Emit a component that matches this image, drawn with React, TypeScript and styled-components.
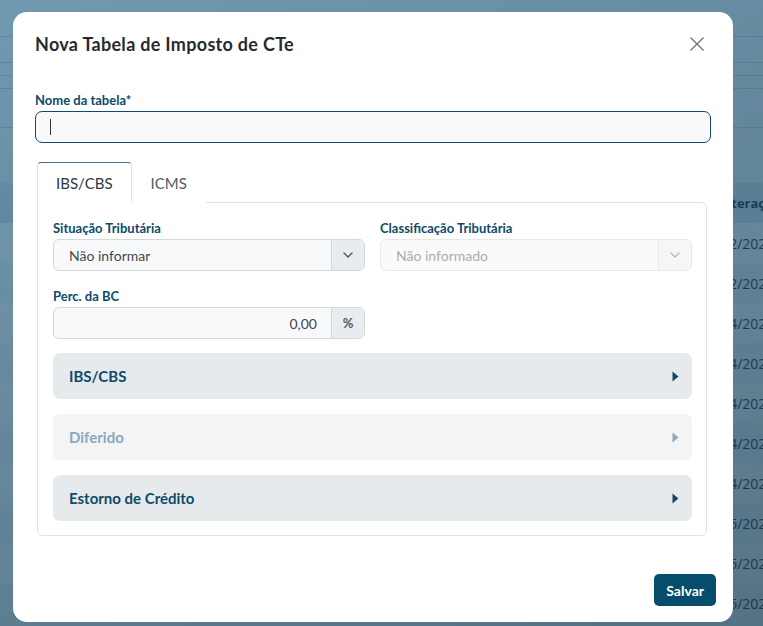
import React from 'react';
import styled, { createGlobalStyle } from 'styled-components';

const GlobalStyle = createGlobalStyle`
  html, body {
    margin: 0;
    padding: 0;
  }
  body {
    width: 763px;
    height: 626px;
    overflow: hidden;
    font-family: Lato, "Open Sans", sans-serif;
  }
  * {
    box-sizing: border-box;
  }
`;

/* ---------- page behind the modal ---------- */

const Page = styled.div`
  width: 763px;
  height: 626px;
  display: flex;
  flex-direction: column;
  overflow: hidden;
  background: #eef2f5;
  font-family: "Open Sans", sans-serif;
  color: #1d2a33;
`;

const Band = styled.div<{ $h: number }>`
  flex-shrink: 0;
  height: ${(p) => p.$h}px;
  border-bottom: 1px solid #c3ced6;
`;

const Spacer = styled.div<{ $h: number }>`
  flex-shrink: 0;
  height: ${(p) => p.$h}px;
`;

const TableRow = styled.div<{ $head?: boolean; $odd?: boolean }>`
  flex-shrink: 0;
  display: flex;
  align-items: center;
  height: 40px;
  padding-left: ${(p) => (p.$head ? '696px' : '700px')};
  white-space: nowrap;
  font-weight: ${(p) => (p.$head ? 700 : 400)};
  font-size: ${(p) => (p.$head ? '13px' : '14px')};
  background: ${(p) => (p.$head ? '#dbe3e9' : p.$odd ? '#f3f6f8' : '#ffffff')};
`;

/* ---------- modal ---------- */

const Backdrop = styled.div`
  position: fixed;
  inset: 0;
  padding: 12px 0 0 13px;
  background: linear-gradient(160deg, rgba(22, 88, 124, 0.58), rgba(22, 62, 86, 0.72));
`;

const Modal = styled.div`
  width: 720px;
  height: 610px;
  display: flex;
  flex-direction: column;
  background: #fff;
  border-radius: 14px;
  padding: 20px 17px 16px 22px;
  font-family: Lato, "Open Sans", sans-serif;
`;

const Header = styled.div`
  display: flex;
  align-items: center;
  justify-content: space-between;
  height: 24px;
`;

const Title = styled.h2`
  margin: 0;
  font-size: 18px;
  font-weight: 700;
  color: #262b30;
  letter-spacing: 0.3px;
`;

const CloseButton = styled.button`
  display: flex;
  align-items: center;
  justify-content: center;
  width: 24px;
  height: 24px;
  margin-right: 7px;
  padding: 0;
  border: none;
  background: none;
  color: #6f6f6f;
  cursor: pointer;
`;

const Label = styled.label`
  display: block;
  margin-bottom: 3px;
  font-size: 13px;
  line-height: 16px;
  font-weight: 700;
  color: #0d4a6b;
`;

const NameField = styled.div`
  margin-top: 36px;
  margin-right: 5px;
`;

const InputWrap = styled.div`
  position: relative;
`;

const TextInput = styled.input`
  width: 100%;
  height: 32px;
  padding: 0 15px;
  border: 1px solid #0d4a6b;
  border-radius: 7px;
  background: #f9f9f9;
  font-family: inherit;
  font-size: 14px;
  color: #333;
  outline: none;
  caret-color: #333;
`;

const Cursor = styled.span`
  position: absolute;
  left: 15px;
  top: 8px;
  width: 1px;
  height: 16px;
  background: #333;
  pointer-events: none;
`;

const Tabs = styled.div`
  margin: 19px 9px 0 2px;
`;

const TabList = styled.div`
  display: flex;
  height: 40px;
`;

const Tab = styled.button<{ $active?: boolean }>`
  position: relative;
  z-index: 1;
  height: 41px;
  padding: 0 18px;
  border: 1px solid ${(p) => (p.$active ? '#dee2e6' : 'transparent')};
  border-top-color: ${(p) => (p.$active ? '#4b7189' : 'transparent')};
  border-bottom-color: ${(p) => (p.$active ? '#fff' : 'transparent')};
  border-radius: 4px 4px 0 0;
  background: #fff;
  font-family: inherit;
  font-size: 15px;
  color: ${(p) => (p.$active ? '#2d3a44' : '#555b60')};
  cursor: pointer;
`;

const TabPanel = styled.div`
  height: 334px;
  display: flex;
  flex-direction: column;
  padding: 17px 14px 15px 15px;
  border: 1px solid #dee2e6;
  border-radius: 0 6px 6px 6px;
`;

const FieldGrid = styled.div`
  display: grid;
  grid-template-columns: 1fr 1fr;
  column-gap: 15px;
  row-gap: 17px;
`;

const Group = styled.div<{ $disabled?: boolean }>`
  display: flex;
  height: 32px;
  border: 1px solid ${(p) => (p.$disabled ? '#e6e8ea' : '#d3d8dc')};
  border-radius: 6px;
  overflow: hidden;
  background: ${(p) => (p.$disabled ? '#fafafa' : '#f8f9fa')};
`;

const GroupText = styled.div<{ $disabled?: boolean; $right?: boolean }>`
  flex: 1;
  display: flex;
  align-items: center;
  justify-content: ${(p) => (p.$right ? 'flex-end' : 'flex-start')};
  padding: ${(p) => (p.$right ? '0 14px 0 0' : '0 0 0 15px')};
  font-size: 14px;
  color: ${(p) => (p.$disabled ? '#a9adb1' : '#41484e')};
`;

const Addon = styled.div<{ $disabled?: boolean }>`
  width: 33px;
  display: flex;
  align-items: center;
  justify-content: center;
  border-left: 1px solid ${(p) => (p.$disabled ? '#e6e8ea' : '#d3d8dc')};
  background: ${(p) => (p.$disabled ? '#f5f6f7' : '#e9ecef')};
  color: ${(p) => (p.$disabled ? '#b5babe' : '#4d555c')};
  font-size: 13px;
  font-weight: 700;
`;

const Accordions = styled.div`
  display: flex;
  flex-direction: column;
  gap: 15px;
  margin-top: 14px;
`;

const AccordionItem = styled.button<{ $disabled?: boolean }>`
  display: flex;
  align-items: center;
  justify-content: space-between;
  height: 46px;
  padding: 0 13px 0 16px;
  border: none;
  border-radius: 7px;
  background: ${(p) => (p.$disabled ? '#f3f4f6' : '#e7eaed')};
  font-family: inherit;
  font-size: 15px;
  font-weight: 700;
  color: ${(p) => (p.$disabled ? '#8ea7ba' : '#0d4a6b')};
  cursor: ${(p) => (p.$disabled ? 'default' : 'pointer')};
`;

const Footer = styled.div`
  display: flex;
  justify-content: flex-end;
  margin-top: auto;
`;

const SaveButton = styled.button`
  height: 32px;
  padding: 0 12px;
  border: none;
  border-radius: 5px;
  background: #064c6b;
  font-family: inherit;
  font-size: 14px;
  font-weight: 700;
  color: #fff;
  cursor: pointer;
`;

const Chevron = () => (
  <svg width="10" height="6" viewBox="0 0 10 6" fill="none">
    <path d="M1 1l4 4 4-4" stroke="currentColor" strokeWidth="1.4" strokeLinecap="round" strokeLinejoin="round" />
  </svg>
);

const Caret = () => (
  <svg width="7" height="11" viewBox="0 0 7 11">
    <path d="M0.5 0.5L6.5 5.5L0.5 10.5Z" fill="currentColor" />
  </svg>
);

const dates = [
  '15/12/2025',
  '10/12/2025',
  '28/04/2025',
  '22/04/2025',
  '17/04/2025',
  '09/04/2025',
  '03/04/2025',
  '26/05/2025',
  '19/05/2025',
  '12/05/2025',
];

export default function App() {
  return (
    <>
      <GlobalStyle />
      <Page>
        <Band $h={37} />
        <Band $h={26} />
        <Band $h={13} />
        <Band $h={13} />
        <Band $h={39} />
        <Spacer $h={55} />
        <TableRow $head>Dt. Alteração</TableRow>
        {dates.map((d, i) => (
          <TableRow key={d} $odd={i % 2 === 1}>
            {d}
          </TableRow>
        ))}
      </Page>

      <Backdrop>
        <Modal role="dialog" aria-modal="true">
          <Header>
            <Title>Nova Tabela de Imposto de CTe</Title>
            <CloseButton aria-label="Fechar">
              <svg width="16" height="16" viewBox="0 0 16 16">
                <path d="M1.5 1.5l13 13M14.5 1.5l-13 13" stroke="currentColor" strokeWidth="1.3" />
              </svg>
            </CloseButton>
          </Header>

          <NameField>
            <Label htmlFor="nome">Nome da tabela*</Label>
            <InputWrap>
              <TextInput id="nome" />
              <Cursor />
            </InputWrap>
          </NameField>

          <Tabs>
            <TabList>
              <Tab $active>IBS/CBS</Tab>
              <Tab>ICMS</Tab>
            </TabList>
            <TabPanel>
              <FieldGrid>
                <div>
                  <Label>Situação Tributária</Label>
                  <Group>
                    <GroupText>Não informar</GroupText>
                    <Addon>
                      <Chevron />
                    </Addon>
                  </Group>
                </div>
                <div>
                  <Label>Classificação Tributária</Label>
                  <Group $disabled>
                    <GroupText $disabled>Não informado</GroupText>
                    <Addon $disabled>
                      <Chevron />
                    </Addon>
                  </Group>
                </div>
                <div>
                  <Label>Perc. da BC</Label>
                  <Group>
                    <GroupText $right>0,00</GroupText>
                    <Addon>%</Addon>
                  </Group>
                </div>
              </FieldGrid>

              <Accordions>
                <AccordionItem>
                  IBS/CBS
                  <Caret />
                </AccordionItem>
                <AccordionItem $disabled>
                  Diferido
                  <Caret />
                </AccordionItem>
                <AccordionItem>
                  Estorno de Crédito
                  <Caret />
                </AccordionItem>
              </Accordions>
            </TabPanel>
          </Tabs>

          <Footer>
            <SaveButton>Salvar</SaveButton>
          </Footer>
        </Modal>
      </Backdrop>
    </>
  );
}
